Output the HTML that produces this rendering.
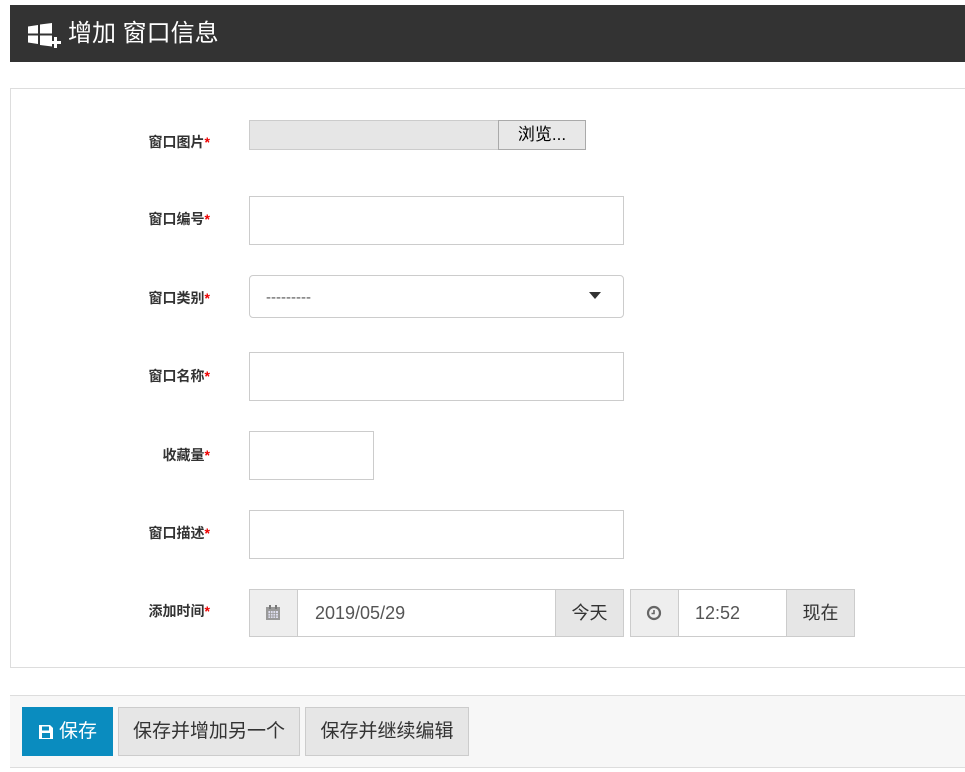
<!DOCTYPE html><html><head><meta charset="utf-8"><style>
body{margin:0;width:965px;height:772px;background:#fff;font-family:"Liberation Sans","Noto Sans CJK SC",sans-serif;position:relative;overflow:hidden}
.a{position:absolute;box-sizing:border-box}
.hd{left:10px;top:5px;width:955px;height:57px;background:#333;color:#fff;font-size:24px;line-height:57px;padding-left:58px}
.panel{left:10px;top:88px;width:965px;height:580px;border:1px solid #ddd}
.lb{width:110px;left:100px;text-align:right;font-size:14px;font-weight:bold;color:#333}
.lb b{color:#e00}
.in{border:1px solid #ccc;background:#fff}
.g{background:#e6e6e6;border:1px solid #ccc;color:#333;font-size:18px;text-align:center}
.ft{left:10px;top:695px;width:965px;height:73px;background:#f7f7f7;border-top:1px solid #ddd;border-bottom:1px solid #ddd}
</style></head><body>
<div class="a hd">增加 窗口信息</div>
<svg class="a" style="left:28px;top:23px" width="36" height="25"><path d="M0 3.5l10-1.5v8.5H0zM12 1.5L24 0v10.5H12zM0 12.5h10v8.5L0 19.5zM12 12.5h12v11L12 22z" fill="#fff"/><rect x="26" y="14" width="3" height="11" fill="#fff"/><rect x="22" y="18" width="11" height="3" fill="#fff"/></svg>
<div class="a panel"></div>
<div class="a lb" style="top:132px">窗口图片<b>*</b></div>
<div class="a" style="left:249px;top:120px;width:250px;height:30px;background:#e6e6e6;border:1px solid #ccc"></div>
<div class="a" style="left:498px;top:120px;width:88px;height:30px;background:#e8e8e8;border:1px solid #aaa;font-size:17px;text-align:center;line-height:28px">浏览...</div>
<div class="a lb" style="top:209px">窗口编号<b>*</b></div>
<div class="a in" style="left:249px;top:196px;width:375px;height:49px"></div>
<div class="a lb" style="top:288px">窗口类别<b>*</b></div>
<div class="a in" style="left:249px;top:275px;width:375px;height:43px;border-radius:4px;font-size:15px;line-height:43px;padding-left:16px;color:#555">---------</div>
<svg class="a" style="left:589px;top:292px" width="12" height="8"><path d="M0 0h12L6 7z" fill="#333"/></svg>
<div class="a lb" style="top:366px">窗口名称<b>*</b></div>
<div class="a in" style="left:249px;top:352px;width:375px;height:49px"></div>
<div class="a lb" style="top:445px">收藏量<b>*</b></div>
<div class="a in" style="left:249px;top:431px;width:125px;height:49px"></div>
<div class="a lb" style="top:523px">窗口描述<b>*</b></div>
<div class="a in" style="left:249px;top:510px;width:375px;height:49px"></div>
<div class="a lb" style="top:601px">添加时间<b>*</b></div>
<div class="a" style="left:249px;top:589px;width:49px;height:48px;background:#eee;border:1px solid #ccc"></div>
<svg class="a" style="left:265px;top:604px" width="16" height="17"><rect x="1" y="3" width="14" height="13" fill="#999"/><rect x="3" y="7" width="10" height="7" fill="#dde"/><path d="M3 7v7M5.5 7v7M8 7v7M10.5 7v7M3 9.5h10M3 12h10" stroke="#999" stroke-width=".8"/><rect x="4" y="1" width="2" height="4" fill="#777"/><rect x="10" y="1" width="2" height="4" fill="#777"/></svg>
<div class="a in" style="left:297px;top:589px;width:259px;height:48px;font-size:18px;line-height:46px;padding-left:17px;color:#555">2019/05/29</div>
<div class="a g" style="left:555px;top:589px;width:69px;height:48px;line-height:46px">今天</div>
<div class="a" style="left:630px;top:589px;width:49px;height:48px;background:#eee;border:1px solid #ccc"></div>
<svg class="a" style="left:646px;top:605px" width="16" height="16"><circle cx="8" cy="8" r="6" fill="none" stroke="#666" stroke-width="2.2"/><path d="M8 5v3.5H5.5" stroke="#666" stroke-width="1.6" fill="none"/></svg>
<div class="a in" style="left:678px;top:589px;width:109px;height:48px;font-size:18px;line-height:46px;padding-left:16px;color:#555">12:52</div>
<div class="a g" style="left:786px;top:589px;width:69px;height:48px;line-height:46px">现在</div>
<div class="a ft"></div>
<div class="a" style="left:22px;top:707px;width:91px;height:49px;background:#0a8cbf;color:#fff;font-size:19px;line-height:49px;padding-left:37px">保存</div>
<svg class="a" style="left:38px;top:724px" width="16" height="16"><path d="M1 1h11l3 3v11H1z" fill="#fff"/><rect x="4" y="2.5" width="7" height="4" fill="#0a8cbf"/><rect x="4" y="9" width="8" height="5" fill="#0a8cbf"/></svg>
<div class="a g" style="left:118px;top:707px;width:182px;height:49px;line-height:47px;font-size:19px">保存并增加另一个</div>
<div class="a g" style="left:305px;top:707px;width:164px;height:49px;line-height:47px;font-size:19px">保存并继续编辑</div>
</body></html>
